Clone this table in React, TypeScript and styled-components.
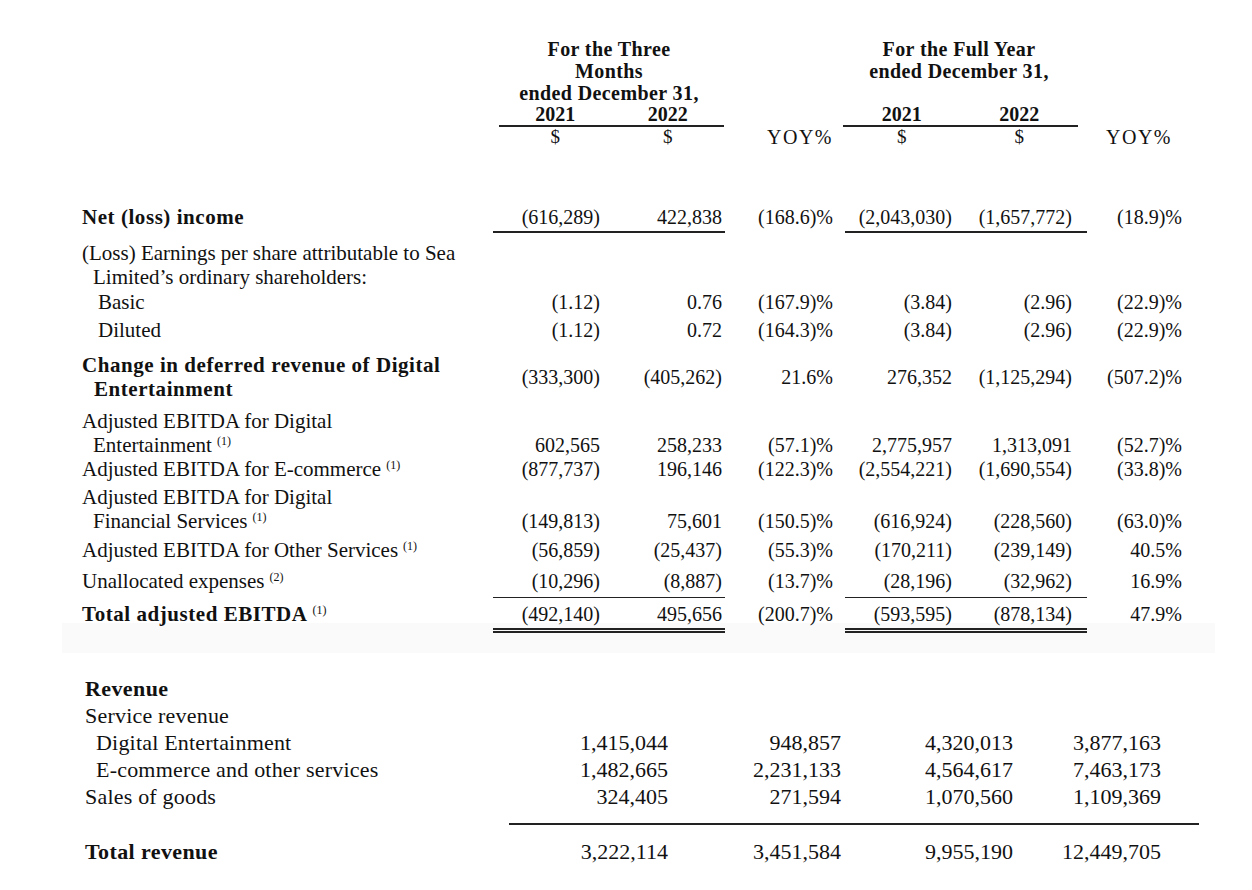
import React from "react";
import styled, { createGlobalStyle, css } from "styled-components";

const GlobalStyle = createGlobalStyle`
  html, body { margin: 0; padding: 0; background: #ffffff; }
  body {
    font-family: "Liberation Serif", "Times New Roman", serif;
    color: #111111;
  }
`;

const COLS = "411px 110px 122px 120px 110px 132px 98px";
const BOTTOM_COLS = "475px 108px 173px 172px 148px";

const Page = styled.div`
  width: 1252px;
  min-height: 890px;
  background: #ffffff;
`;

const TopSection = styled.section`
  margin-left: 62px;
  width: 1153px;
  box-sizing: border-box;
  padding: 38px 30px 20px 20px;
  background: linear-gradient(
    to bottom,
    #ffffff 0,
    #ffffff calc(100% - 30px),
    #fafafa calc(100% - 30px),
    #fafafa 100%
  );
`;

const HeaderGrid = styled.div`
  display: grid;
  grid-template-columns: ${COLS};
`;

const Title = styled.div<{ $col: string; $pr?: number }>`
  grid-column: ${(p) => p.$col};
  grid-row: 1;
  text-align: center;
  font-weight: bold;
  font-size: 20px;
  letter-spacing: 0.4px;
  line-height: 22px;
  padding-right: ${(p) => p.$pr ?? 0}px;
`;

const YearGroup = styled.div<{ $col: string; $row: number; $ml: number; $mr: number; $rule?: boolean }>`
  grid-column: ${(p) => p.$col};
  grid-row: ${(p) => p.$row};
  display: grid;
  grid-template-columns: 1fr 1fr;
  margin-left: ${(p) => p.$ml}px;
  margin-right: ${(p) => p.$mr}px;
  text-align: center;
  line-height: 20px;
  ${(p) =>
    p.$rule &&
    css`
      border-bottom: 2px solid #222;
      padding-bottom: 1px;
    `}
`;

const Year = styled.span`
  font-weight: bold;
  font-size: 20px;
`;

const Dollar = styled.span`
  font-size: 19px;
`;

const YoyHead = styled.div<{ $col: number; $pr: number }>`
  grid-column: ${(p) => p.$col};
  grid-row: 3;
  text-align: right;
  padding-right: ${(p) => p.$pr}px;
  font-size: 20px;
  letter-spacing: 1.5px;
  line-height: 20px;
`;

const Row = styled.div<{ $mt: number; $align?: string }>`
  display: grid;
  grid-template-columns: ${COLS};
  margin-top: ${(p) => p.$mt}px;
  align-items: ${(p) => p.$align ?? "start"};
`;

const Label = styled.div<{ $bold?: boolean; $indent?: number; $hang?: number; $total?: boolean }>`
  font-size: 21px;
  line-height: 24px;
  font-weight: ${(p) => (p.$bold ? "bold" : "normal")};
  letter-spacing: ${(p) => (p.$bold ? "0.55px" : "0")};
  white-space: nowrap;
  padding-left: ${(p) => (p.$indent ?? 0) + (p.$hang ?? 0)}px;
  text-indent: ${(p) => -(p.$hang ?? 0)}px;
  padding-top: ${(p) => (p.$total ? 5 : 0)}px;
`;

const Sup = styled.span`
  font-size: 12px;
  font-weight: normal;
  letter-spacing: 0;
  vertical-align: 7px;
  line-height: 0;
  margin-left: 5px;
`;

type RuleKind = "none" | "under" | "total";

const Num = styled.div<{ $pr: number; $rule: RuleKind; $padTop?: boolean }>`
  text-align: right;
  font-size: 20px;
  line-height: 24px;
  white-space: nowrap;
  padding-right: ${(p) => p.$pr}px;
  padding-top: ${(p) => (p.$padTop ? 5 : 0)}px;
  ${(p) =>
    p.$rule === "under" &&
    css`
      border-bottom: 2px solid #222;
      padding-bottom: 2px;
    `}
  ${(p) =>
    p.$rule === "total" &&
    css`
      border-top: 1.5px solid #222;
      padding-top: 4px;
      padding-bottom: 2px;
      border-bottom: 5px double #222;
    `}
`;

const BottomSection = styled.section`
  padding: 22px 0 0 85px;
`;

const BRow = styled.div<{ $mt?: number }>`
  display: grid;
  grid-template-columns: ${BOTTOM_COLS};
  margin-top: ${(p) => p.$mt ?? 0}px;
  font-size: 22px;
  line-height: 27px;
`;

const BLabel = styled.div<{ $bold?: boolean; $indent?: number }>`
  font-weight: ${(p) => (p.$bold ? "bold" : "normal")};
  letter-spacing: ${(p) => (p.$bold ? "0.4px" : "0.2px")};
  padding-left: ${(p) => p.$indent ?? 0}px;
  white-space: nowrap;
`;

const BNum = styled.div`
  text-align: right;
  white-space: nowrap;
`;

const BRule = styled.div`
  margin: 13px 0 0 424px;
  width: 690px;
  height: 2px;
  background: #222;
`;

type TopRow = {
  label: string[];
  bold?: boolean;
  sup?: string;
  indent?: number;
  hang?: number;
  mt: number;
  align?: string;
  rule?: RuleKind;
  vals: string[];
};

const NUM_PR = [3, 3, 12, 3, 15, 3];
const MONEY = [true, true, false, true, true, false];

const topRows: TopRow[] = [
  {
    label: ["Net (loss) income"],
    bold: true,
    mt: 58,
    rule: "under",
    vals: ["(616,289)", "422,838", "(168.6)%", "(2,043,030)", "(1,657,772)", "(18.9)%"],
  },
  {
    label: ["(Loss) Earnings per share attributable to Sea", "Limited’s ordinary shareholders:"],
    hang: 11,
    mt: 8,
    vals: [],
  },
  {
    label: ["Basic"],
    indent: 16,
    mt: 1,
    vals: ["(1.12)", "0.76", "(167.9)%", "(3.84)", "(2.96)", "(22.9)%"],
  },
  {
    label: ["Diluted"],
    indent: 16,
    mt: 4,
    vals: ["(1.12)", "0.72", "(164.3)%", "(3.84)", "(2.96)", "(22.9)%"],
  },
  {
    label: ["Change in deferred revenue of Digital", "Entertainment"],
    bold: true,
    hang: 12,
    mt: 11,
    align: "center",
    vals: ["(333,300)", "(405,262)", "21.6%", "276,352", "(1,125,294)", "(507.2)%"],
  },
  {
    label: ["Adjusted EBITDA for Digital", "Entertainment"],
    sup: "(1)",
    hang: 11,
    mt: 8,
    align: "end",
    vals: ["602,565", "258,233", "(57.1)%", "2,775,957", "1,313,091", "(52.7)%"],
  },
  {
    label: ["Adjusted EBITDA for E-commerce"],
    sup: "(1)",
    mt: 0,
    vals: ["(877,737)", "196,146", "(122.3)%", "(2,554,221)", "(1,690,554)", "(33.8)%"],
  },
  {
    label: ["Adjusted EBITDA for Digital", "Financial Services"],
    sup: "(1)",
    hang: 11,
    mt: 4,
    align: "end",
    vals: ["(149,813)", "75,601", "(150.5)%", "(616,924)", "(228,560)", "(63.0)%"],
  },
  {
    label: ["Adjusted EBITDA for Other Services"],
    sup: "(1)",
    mt: 5,
    vals: ["(56,859)", "(25,437)", "(55.3)%", "(170,211)", "(239,149)", "40.5%"],
  },
  {
    label: ["Unallocated expenses"],
    sup: "(2)",
    mt: 7,
    vals: ["(10,296)", "(8,887)", "(13.7)%", "(28,196)", "(32,962)", "16.9%"],
  },
  {
    label: ["Total adjusted EBITDA"],
    bold: true,
    sup: "(1)",
    mt: 4,
    rule: "total",
    vals: ["(492,140)", "495,656", "(200.7)%", "(593,595)", "(878,134)", "47.9%"],
  },
];

type BottomRow = { label: string; bold?: boolean; indent?: number; vals: string[] };

const bottomRows: BottomRow[] = [
  { label: "Revenue", bold: true, vals: [] },
  { label: "Service revenue", vals: [] },
  {
    label: "Digital Entertainment",
    indent: 11,
    vals: ["1,415,044", "948,857", "4,320,013", "3,877,163"],
  },
  {
    label: "E-commerce and other services",
    indent: 11,
    vals: ["1,482,665", "2,231,133", "4,564,617", "7,463,173"],
  },
  { label: "Sales of goods", vals: ["324,405", "271,594", "1,070,560", "1,109,369"] },
];

const totalRevenue = ["3,222,114", "3,451,584", "9,955,190", "12,449,705"];

function TopTableRow({ row }: { row: TopRow }) {
  const isTotal = row.rule === "total";
  return (
    <Row $mt={row.mt} $align={row.align}>
      <Label $bold={row.bold} $indent={row.indent} $hang={row.hang} $total={isTotal}>
        {row.label.map((line, i) => (
          <React.Fragment key={i}>
            {i > 0 && <br />}
            {line}
          </React.Fragment>
        ))}
        {row.sup && <Sup>{row.sup}</Sup>}
      </Label>
      {NUM_PR.map((pr, i) => {
        const rule: RuleKind = row.rule && MONEY[i] ? row.rule : "none";
        return (
          <Num key={i} $pr={pr} $rule={rule} $padTop={isTotal && !MONEY[i]}>
            {row.vals[i] ?? ""}
          </Num>
        );
      })}
    </Row>
  );
}

export default function App() {
  return (
    <Page>
      <GlobalStyle />
      <TopSection>
        <HeaderGrid>
          <Title $col="2 / 4">
            For the Three
            <br />
            Months
            <br />
            ended December 31,
          </Title>
          <Title $col="5 / 7" $pr={14}>
            For the Full Year
            <br />
            ended December 31,
          </Title>
          <YearGroup $col="2 / 4" $row={2} $ml={6} $mr={1} $rule>
            <Year>2021</Year>
            <Year>2022</Year>
          </YearGroup>
          <YearGroup $col="5 / 7" $row={2} $ml={-2} $mr={9} $rule>
            <Year>2021</Year>
            <Year>2022</Year>
          </YearGroup>
          <YearGroup $col="2 / 4" $row={3} $ml={6} $mr={1}>
            <Dollar>$</Dollar>
            <Dollar>$</Dollar>
          </YearGroup>
          <YoyHead $col={4} $pr={12}>
            YOY%
          </YoyHead>
          <YearGroup $col="5 / 7" $row={3} $ml={-2} $mr={9}>
            <Dollar>$</Dollar>
            <Dollar>$</Dollar>
          </YearGroup>
          <YoyHead $col={7} $pr={13}>
            YOY%
          </YoyHead>
        </HeaderGrid>
        {topRows.map((row, i) => (
          <TopTableRow key={i} row={row} />
        ))}
      </TopSection>
      <BottomSection>
        {bottomRows.map((r, i) => (
          <BRow key={i}>
            <BLabel $bold={r.bold} $indent={r.indent}>
              {r.label}
            </BLabel>
            {[0, 1, 2, 3].map((j) => (
              <BNum key={j}>{r.vals[j] ?? ""}</BNum>
            ))}
          </BRow>
        ))}
        <BRule />
        <BRow $mt={13}>
          <BLabel $bold>Total revenue</BLabel>
          {totalRevenue.map((v, j) => (
            <BNum key={j}>{v}</BNum>
          ))}
        </BRow>
      </BottomSection>
    </Page>
  );
}
